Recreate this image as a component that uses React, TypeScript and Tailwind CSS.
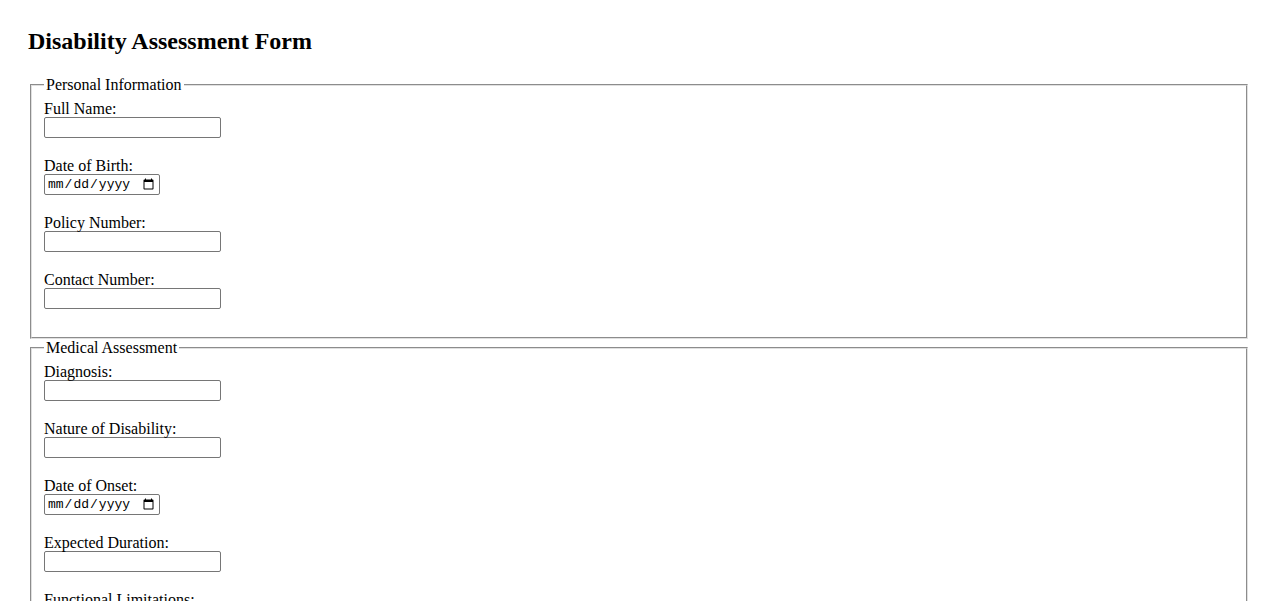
import React from 'react';

type Field = { label: string; type?: 'text' | 'date' | 'textarea' };

const personal: Field[] = [
  { label: 'Full Name:' },
  { label: 'Date of Birth:', type: 'date' },
  { label: 'Policy Number:' },
  { label: 'Contact Number:' },
];

const medical: Field[] = [
  { label: 'Diagnosis:' },
  { label: 'Nature of Disability:' },
  { label: 'Date of Onset:', type: 'date' },
  { label: 'Expected Duration:' },
  { label: 'Functional Limitations:', type: 'textarea' },
  { label: 'Treating Physician:' },
];

const FormField: React.FC<{ field: Field }> = ({ field }) => {
  const base =
    'block border border-[#767676] rounded-[2px] bg-white px-[2px] py-[1px] outline-none';
  return (
    <div className="pb-[19px]">
      <label className="block h-[17px] leading-[18.4px]">{field.label}</label>
      {field.type === 'date' ? (
        <input
          type="date"
          className={`${base} w-[116px] h-[21px] font-['Liberation_Mono',monospace] text-[13px] text-black`}
        />
      ) : field.type === 'textarea' ? (
        <textarea rows={4} className={`${base} w-[181px] h-[38px] text-[13px]`} />
      ) : (
        <input type="text" className={`${base} w-[177px] h-[21px] text-[13px]`} />
      )}
    </div>
  );
};

const Section: React.FC<{ title: string; fields: Field[] }> = ({ title, fields }) => (
  <fieldset className="mx-[2px] border-2 border-[#e0e0e0] [border-style:groove] px-[12px] pt-[5.5px] pb-[9px]">
    <legend className="px-[2px] leading-[18.4px]">{title}</legend>
    {fields.map((f) => (
      <FormField key={f.label} field={f} />
    ))}
  </fieldset>
);

export default function App() {
  return (
    <div className="min-h-screen bg-white text-black font-['Liberation_Serif',serif] text-[16px] px-[28px] pt-[28px] pb-[28px]">
      <h2 className="text-[24px] font-bold leading-[26.6px] mb-[21.4px]">Disability Assessment Form</h2>
      <form>
        <Section title="Personal Information" fields={personal} />
        <Section title="Medical Assessment" fields={medical} />
      </form>
    </div>
  );
}
